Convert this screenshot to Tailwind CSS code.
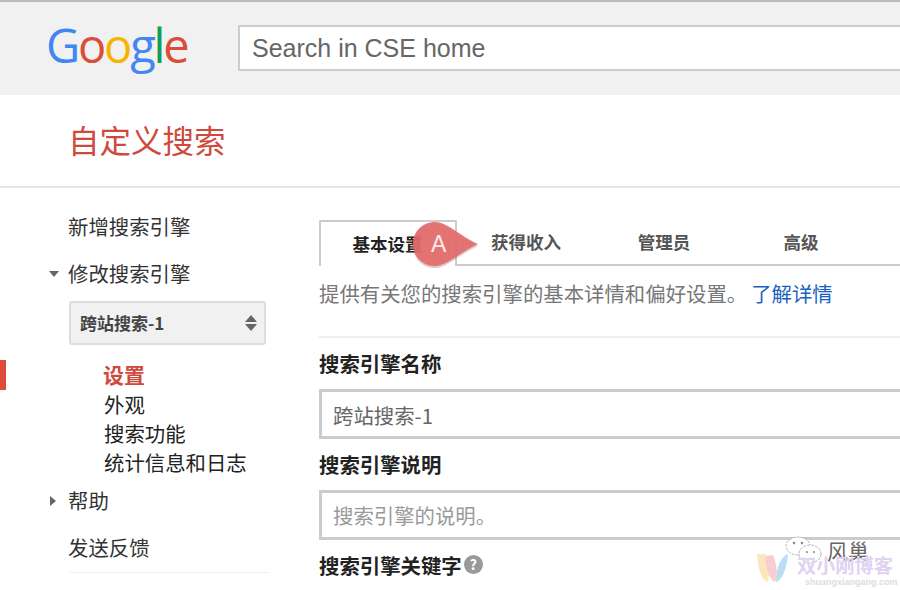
<!DOCTYPE html>
<html lang="zh-CN">
<head>
  <meta charset="UTF-8" />
  <title>自定义搜索</title>
  <script src="https://cdn.jsdelivr.net/npm/@tailwindcss/browser@4"></script>
</head>
<body class="relative w-[900px] h-[590px] overflow-hidden bg-white text-[#333] font-['Noto_Sans_CJK_SC','Noto_Sans',sans-serif]">

<!-- Header -->
<header class="h-[95px] bg-[#f1f1f1] border-t-2 border-[#bbb] flex items-center pl-[46px]">
  <div class="w-[192px] h-[60px] flex font-['Open_Sans',sans-serif] font-medium text-[47px] leading-[56px] tracking-[-2.2px] -mt-[3px]">
    <span class="text-[#4285f4]">G</span><span class="text-[#dd4b39]">o</span><span class="text-[#f4b400]">o</span><span class="text-[#4285f4]">g</span><span class="text-[#0f9d58]">l</span><span class="text-[#dd4b39]">e</span>
  </div>
  <div class="flex-1 h-[46px] -mt-[2px] bg-white border-2 border-r-0 border-[#ccc] flex items-center pl-[12px] pt-[2px] text-[25px] text-[#666] font-['Liberation_Sans',sans-serif]">Search in CSE home</div>
</header>

<!-- Title -->
<div class="h-[93px] border-b-2 border-[#e5e5e5] flex items-center pl-[68px] pb-[2px] text-[31.5px] text-[#cf4a3c]">自定义搜索</div>

<div class="flex">
  <!-- Sidebar -->
  <aside class="relative w-[319px] shrink-0 pt-[24px] pl-[68px] text-[20.4px] leading-[28px]">
    <div>新增搜索引擎</div>
    <div class="relative mt-[19px]">
      <span class="absolute -left-[19px] top-[12px] w-0 h-0 border-x-[5px] border-x-transparent border-t-[6px] border-t-[#666]"></span>
      修改搜索引擎
    </div>
    <div class="ml-[1px] mt-[14px] w-[197px] h-[44px] bg-[#f1f1f1] border-2 border-[#ddd] rounded-[3px] flex items-center justify-between pl-[9px] pr-[7px] text-[17px] font-bold text-[#444]">
      <span>跨站搜索-1</span>
      <span class="flex flex-col gap-[2px]">
        <span class="w-0 h-0 border-x-[6px] border-x-transparent border-b-[7px] border-b-[#666]"></span>
        <span class="w-0 h-0 border-x-[6px] border-x-transparent border-t-[7px] border-t-[#666]"></span>
      </span>
    </div>
    <div class="mt-[15px] pl-[36px] text-[#222]">
      <div class="h-[30px] font-bold text-[21px] text-[#cf4a3c] -ml-[1px]">设置</div>
      <div class="h-[29px]">外观</div>
      <div class="h-[29px]">搜索功能</div>
      <div class="h-[29px]">统计信息和日志</div>
    </div>
    <div class="relative mt-[9px]">
      <span class="absolute -left-[18px] top-[10px] w-0 h-0 border-y-[5px] border-y-transparent border-l-[6px] border-l-[#666]"></span>
      帮助
    </div>
    <div class="mt-[19px]">发送反馈</div>
    <div class="ml-[1px] mt-[11px] w-[200px] border-t border-[#eee]"></div>
    <span class="absolute left-0 top-[172px] w-[6px] h-[30px] bg-[#dd4b39]"></span>
  </aside>

  <!-- Main -->
  <main class="flex-1 pt-[32px] min-w-0">
    <div class="flex h-[46px] border-b-2 border-[#ccc] text-[17.5px] font-bold text-[#555]">
      <div class="w-[138px] h-[46px] bg-white border-2 border-b-0 border-[#ccc] rounded-t-[2px] flex items-center justify-center text-[#222] pr-[1px]">基本设置</div>
      <div class="w-[138px] flex items-center justify-center">获得收入</div>
      <div class="w-[138px] flex items-center justify-center">管理员</div>
      <div class="w-[138px] flex items-center justify-center -ml-[1px]">高级</div>
    </div>
    <div class="mt-[12px] h-[30px] leading-[30px] text-[20.4px] text-[#777] whitespace-nowrap">提供有关您的搜索引擎的基本详情和偏好设置。<a class="ml-[4px] text-[#1a62c0]">了解详情</a></div>
    <div class="mt-[28px] border-t-2 border-[#eee]"></div>
    <h2 class="mt-[10px] h-[30px] leading-[30px] text-[20.4px] font-bold text-[#222]">搜索引擎名称</h2>
    <div class="mt-[11px] h-[50px] border-[3px] border-r-0 border-[#ccc] flex items-center pl-[11px] pt-[2px] text-[20.4px] text-[#666]">跨站搜索-1</div>
    <h2 class="mt-[10px] h-[30px] leading-[30px] text-[20.4px] font-bold text-[#222]">搜索引擎说明</h2>
    <div class="mt-[11px] h-[50px] border-[3px] border-r-0 border-[#ccc] flex items-center pl-[11px] pt-[1px] text-[20.4px] text-[#999]">搜索引擎的说明。</div>
    <h2 class="mt-[10px] h-[30px] leading-[30px] text-[20.4px] font-bold text-[#222] flex items-center">搜索引擎关键字
      <span class="ml-[2px] w-[19px] h-[19px] -mt-[2px] rounded-full bg-[#999] text-white text-[14px] leading-[19px] text-center">?</span>
    </h2>
  </main>
</div>

<!-- Callout marker over the tabs -->
<svg class="absolute left-[408px] top-[216px]" width="76" height="60" viewBox="0 0 76 60">
  <path d="M5 28C5 15 15 6 27 6C39 6 52 20 70 28C52 36 39 50 27 50C15 50 5 41 5 28Z" fill="#8a4a4a" opacity="0.3" transform="translate(0 2)" />
  <path d="M5 28C5 15 15 6 27 6C39 6 52 20 70 28C52 36 39 50 27 50C15 50 5 41 5 28Z" fill="#e36a6a" opacity="0.92" />
</svg>
<span class="absolute left-[431px] top-[227px] text-[23px] leading-[34px] text-white/85 font-['Liberation_Sans',sans-serif]">A</span>

<!-- Watermark -->
<svg class="absolute left-[756px] top-[552px]" width="36" height="32" viewBox="0 0 36 32">
  <path d="M1 2C2 16 5 28 12 30C14 24 13 10 10 2Z" fill="#fbe6bd" />
  <path d="M9 4C10 16 13 28 19 30C23 24 20 10 17 3Z" fill="#f8cfd0" />
  <path d="M20 30C27 28 31 14 32 2C26 4 20 14 20 30Z" fill="#bcdcf3" />
</svg>
<svg class="absolute left-[784px] top-[534px]" width="42" height="32" viewBox="0 0 42 32" fill="#fff" stroke="#999" stroke-width="0.7" stroke-dasharray="3 1">
  <ellipse cx="14" cy="12" rx="12" ry="9" />
  <ellipse cx="26" cy="20" rx="11" ry="9" />
  <circle cx="10" cy="9" r="1" fill="#555" />
  <circle cx="18" cy="9" r="1" fill="#555" />
  <circle cx="23" cy="18" r="0.8" fill="#555" />
  <circle cx="30" cy="18" r="0.8" fill="#555" />
</svg>
<span class="absolute left-[827px] top-[536px] text-[21px] leading-[28px] text-[#666]">风巢</span>
<span class="absolute left-[797px] top-[553px] text-[19.2px] leading-[24px] text-[#e0d2f0] font-bold whitespace-nowrap">双小刚博客</span>
<span class="absolute left-[805px] top-[577px] text-[9px] leading-[11px] text-[#ddd] font-bold font-['Liberation_Sans',sans-serif]">shuangxiaogang.com</span>

</body>
</html>
